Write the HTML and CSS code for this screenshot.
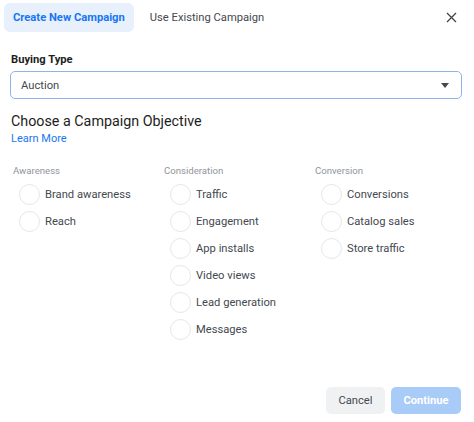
FILE: index.html
```html
<!DOCTYPE html>
<html lang="en">
<head>
    <meta charset="UTF-8">
    <title>Create Campaign</title>
    <link rel="stylesheet" href="styles.css">
</head>
<body>
    <div class="dialog">
        <div class="tabs">
            <div class="tab active">Create New Campaign</div>
            <div class="tab">Use Existing Campaign</div>
            <div class="close">
                <svg width="11" height="11" viewBox="0 0 11 11">
                    <path d="M1 1L10 10M10 1L1 10" stroke="#444" stroke-width="1.3" fill="none"/>
                </svg>
            </div>
        </div>

        <div class="field-label">Buying Type</div>
        <div class="select">
            <span>Auction</span>
            <span class="caret"></span>
        </div>

        <h2 class="title">Choose a Campaign Objective</h2>
        <a class="learn" href="#">Learn More</a>

        <div class="objectives">
            <div class="group">
                <div class="group-name">Awareness</div>
                <div class="option"><span class="radio"></span>Brand awareness</div>
                <div class="option"><span class="radio"></span>Reach</div>
            </div>
            <div class="group">
                <div class="group-name">Consideration</div>
                <div class="option"><span class="radio"></span>Traffic</div>
                <div class="option"><span class="radio"></span>Engagement</div>
                <div class="option"><span class="radio"></span>App installs</div>
                <div class="option"><span class="radio"></span>Video views</div>
                <div class="option"><span class="radio"></span>Lead generation</div>
                <div class="option"><span class="radio"></span>Messages</div>
            </div>
            <div class="group">
                <div class="group-name">Conversion</div>
                <div class="option"><span class="radio"></span>Conversions</div>
                <div class="option"><span class="radio"></span>Catalog sales</div>
                <div class="option"><span class="radio"></span>Store traffic</div>
            </div>
        </div>

        <div class="footer">
            <button class="btn cancel">Cancel</button>
            <button class="btn continue">Continue</button>
        </div>
    </div>
</body>
</html>
```

FILE: styles.css
```css
body {
    margin: 0;
    font-family: Roboto, "Liberation Sans", Arial, sans-serif;
    background-color: #ffffff;
    color: #1c1e21;
}

.dialog {
    width: 474px;
    height: 422px;
    padding: 3px 12px 0 4px;
    box-sizing: border-box;
    display: flex;
    flex-direction: column;
}

.tabs {
    display: flex;
    align-items: center;
    height: 29px;
}

.tab {
    height: 29px;
    line-height: 29px;
    padding: 0 9px;
    font-size: 11.2px;
    color: #444950;
    border-radius: 6px;
    margin-right: 7px;
}

.tab.active {
    background-color: #e7f0fb;
    color: #1877f2;
    font-weight: bold;
}

.close {
    margin-left: auto;
    width: 11px;
    height: 11px;
    margin-right: 5px;
    display: flex;
}

.field-label {
    margin: 21px 0 0 7px;
    font-size: 11.2px;
    font-weight: bold;
    color: #1c1e21;
}

.select {
    margin: 5px 0 0 6px;
    height: 28px;
    border: 1px solid #8fb4e6;
    border-radius: 5px;
    box-sizing: border-box;
    display: flex;
    align-items: center;
    justify-content: space-between;
    padding: 0 12px 0 10px;
    font-size: 11.2px;
    color: #444950;
}

.caret {
    width: 0;
    height: 0;
    border-left: 4px solid transparent;
    border-right: 4px solid transparent;
    border-top: 5px solid #444950;
}

.title {
    margin: 14px 0 0 7px;
    font-size: 14.3px;
    font-weight: normal;
    color: #1c1e21;
}

.learn {
    margin: 3px 0 0 7px;
    font-size: 11px;
    color: #1877f2;
    text-decoration: none;
}

.objectives {
    display: flex;
    margin: 20px 0 0 9px;
}

.group {
    width: 151px;
    flex-shrink: 0;
}

.group-name {
    font-size: 9.6px;
    color: #90949c;
    height: 12px;
    margin-bottom: 4px;
}

.option {
    display: flex;
    align-items: center;
    height: 27px;
    font-size: 11.2px;
    color: #444950;
}

.radio {
    width: 19px;
    height: 19px;
    border: 1px solid #e4e6ea;
    border-radius: 50%;
    margin: 0 5px 0 6px;
}

.footer {
    margin-top: auto;
    margin-bottom: 8px;
    margin-right: 1px;
    display: flex;
    justify-content: flex-end;
    gap: 6px;
}

.btn {
    height: 27px;
    border: none;
    border-radius: 5px;
    font-family: Roboto, "Liberation Sans", Arial, sans-serif;
    font-size: 11.2px;
    padding: 0;
}

.btn.cancel {
    background-color: #f0f1f3;
    color: #444950;
    width: 59px;
}

.btn.continue {
    background-color: #a8cbf8;
    color: #ffffff;
    font-weight: bold;
    width: 70px;
}
```
